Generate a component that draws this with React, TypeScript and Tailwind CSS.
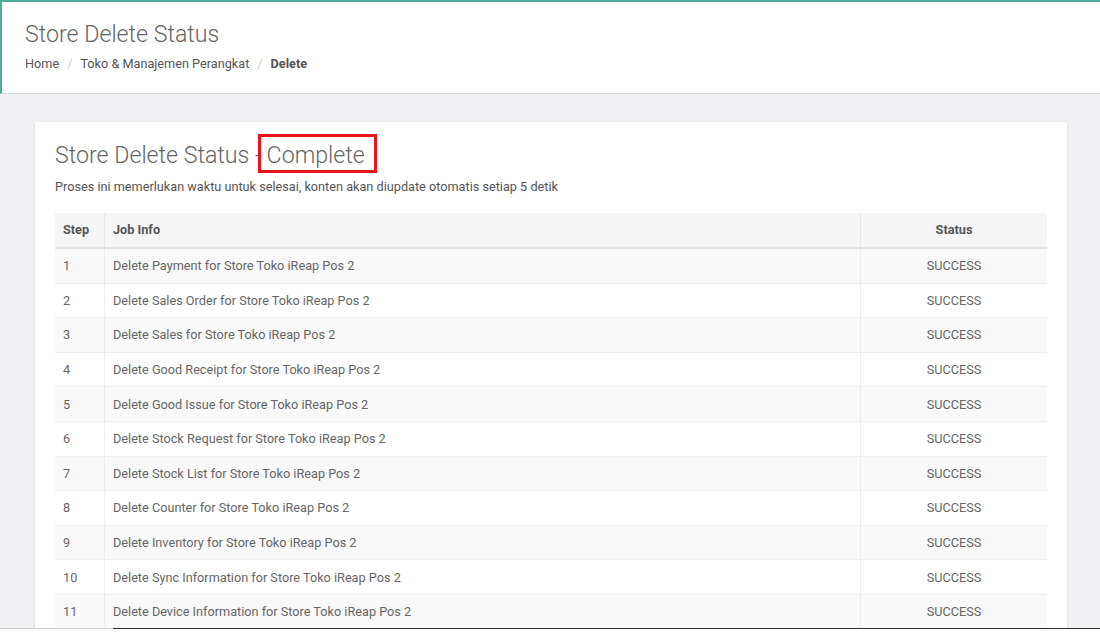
import React from "react";

const jobs = [
  "Delete Payment for Store Toko iReap Pos 2",
  "Delete Sales Order for Store Toko iReap Pos 2",
  "Delete Sales for Store Toko iReap Pos 2",
  "Delete Good Receipt for Store Toko iReap Pos 2",
  "Delete Good Issue for Store Toko iReap Pos 2",
  "Delete Stock Request for Store Toko iReap Pos 2",
  "Delete Stock List for Store Toko iReap Pos 2",
  "Delete Counter for Store Toko iReap Pos 2",
  "Delete Inventory for Store Toko iReap Pos 2",
  "Delete Sync Information for Store Toko iReap Pos 2",
  "Delete Device Information for Store Toko iReap Pos 2",
];

export default function App() {
  return (
    <div className="w-[1100px] h-[641px] overflow-hidden bg-white flex flex-col" style={{ fontFamily: "Roboto, 'Liberation Sans', sans-serif" }}>
      {/* Header */}
      <div className="h-[94px] shrink-0 bg-white border-t-2 border-l-2 border-t-[#4aae9b] border-l-[#4aae9b] border-b border-b-[#dcdcdc] pl-[23px] pt-[18px]">
        <h1 className="text-[23.2px] font-light text-[#666] leading-[28px]">Store Delete Status</h1>
        <div className="mt-[8px] flex items-center text-[12.7px] text-[#555] leading-[16px]">
          <span>Home</span>
          <span className="mx-[8px] text-[#ccc]">/</span>
          <span>Toko &amp; Manajemen Perangkat</span>
          <span className="mx-[8px] text-[#ccc]">/</span>
          <span className="font-bold">Delete</span>
        </div>
      </div>
      {/* Body */}
      <div className="h-[534px] shrink-0 overflow-hidden bg-[#f1f1f3] pl-[35px] pr-[33px] pt-[28px]">
        <div className="bg-white shadow-[0_1px_3px_rgba(0,0,0,0.12)] px-[20px] pt-[20px] pb-[20px]">
          <div className="flex items-center h-[26px]">
            <span className="text-[23.2px] font-light text-[#666] leading-[28px] whitespace-pre">Store Delete Status -</span>
            <span className="ml-[-4px] -mt-[4px] border-[3px] border-[#e8141b] pl-[6px] pr-[9px] h-[39px] flex items-center text-[23.2px] font-light text-[#666]">
              <span className="mt-[4px]">Complete</span>
            </span>
          </div>
          <p className="mt-[10px] text-[12.7px] text-[#555] leading-[18px]">
            Proses ini memerlukan waktu untuk selesai, konten akan diupdate otomatis setiap 5 detik
          </p>
          <div className="mt-[17px] text-[12.7px] text-[#666]">
            <div className="flex h-[36px] bg-[#f5f5f5] border-b-2 border-[#e3e3e3] font-bold text-[#555]">
              <div className="w-[50px] px-[8px] flex items-center border-r border-[#e8e8e8]">Step</div>
              <div className="w-[756px] px-[8px] flex items-center border-r border-[#e8e8e8]">Job Info</div>
              <div className="flex-1 flex items-center justify-center">Status</div>
            </div>
            {jobs.map((j, i) => (
              <div key={i} className={`flex h-[34.6px] border-b border-[#eeeeee] ${i % 2 === 0 ? "bg-[#f9f9f9]" : "bg-white"}`}>
                <div className="w-[50px] px-[8px] flex items-center border-r border-[#eeeeee]">{i + 1}</div>
                <div className="w-[756px] px-[8px] flex items-center border-r border-[#eeeeee]">{j}</div>
                <div className="flex-1 flex items-center justify-center">SUCCESS</div>
              </div>
            ))}
          </div>
        </div>
      </div>
      {/* bottom strip */}
      <div className="flex h-[1px] shrink-0">
        <div className="w-[113px] bg-[#cfcfcf]" />
        <div className="flex-1 bg-[#2e2e2e]" />
      </div>
      <div className="flex-1 bg-white" />
    </div>
  );
}
